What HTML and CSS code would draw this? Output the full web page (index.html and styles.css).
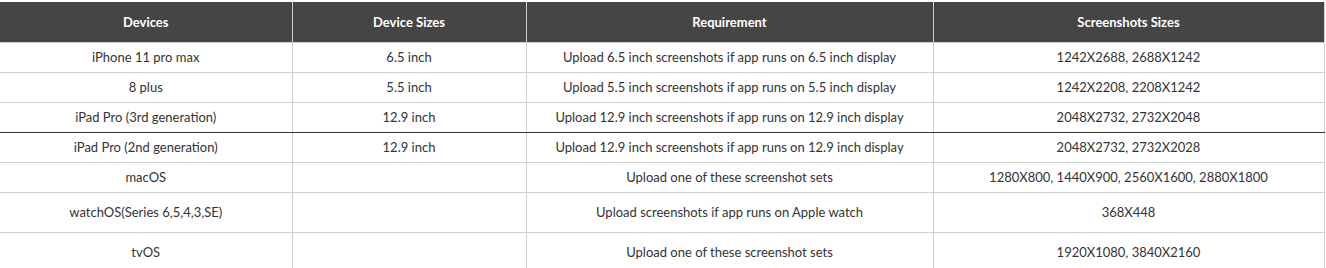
FILE: index.html
```html
<!DOCTYPE html>
<html lang="en">
<head>
  <meta charset="UTF-8" />
  <title>App Store Screenshot Sizes</title>
  <meta name="viewport" content="width=device-width, initial-scale=1.0" />
  <link rel="stylesheet" href="styles.css">
</head>
<body>
  <table class="sizes-table">
    <colgroup>
      <col class="col-device">
      <col class="col-size">
      <col class="col-req">
      <col class="col-shots">
    </colgroup>
    <thead>
      <tr>
        <th>Devices</th>
        <th>Device Sizes</th>
        <th>Requirement</th>
        <th>Screenshots Sizes</th>
      </tr>
    </thead>
    <tbody>
      <tr>
        <td>iPhone 11 pro max</td>
        <td>6.5 inch</td>
        <td>Upload 6.5 inch screenshots if app runs on 6.5 inch display</td>
        <td>1242X2688, 2688X1242</td>
      </tr>
      <tr>
        <td>8 plus</td>
        <td>5.5 inch</td>
        <td>Upload 5.5 inch screenshots if app runs on 5.5 inch display</td>
        <td>1242X2208, 2208X1242</td>
      </tr>
      <tr class="divider">
        <td>iPad Pro (3rd generation)</td>
        <td>12.9 inch</td>
        <td>Upload 12.9 inch screenshots if app runs on 12.9 inch display</td>
        <td>2048X2732, 2732X2048</td>
      </tr>
      <tr>
        <td>iPad Pro (2nd generation)</td>
        <td>12.9 inch</td>
        <td>Upload 12.9 inch screenshots if app runs on 12.9 inch display</td>
        <td>2048X2732, 2732X2028</td>
      </tr>
      <tr>
        <td>macOS</td>
        <td></td>
        <td>Upload one of these screenshot sets</td>
        <td>1280X800, 1440X900, 2560X1600, 2880X1800</td>
      </tr>
      <tr class="tall">
        <td>watchOS(Series 6,5,4,3,SE)</td>
        <td></td>
        <td>Upload screenshots if app runs on Apple watch</td>
        <td>368X448</td>
      </tr>
      <tr class="tall">
        <td>tvOS</td>
        <td></td>
        <td>Upload one of these screenshot sets</td>
        <td>1920X1080, 3840X2160</td>
      </tr>
    </tbody>
  </table>
</body>
</html>
```

FILE: styles.css
```css
body {
  font-family: Lato, "Liberation Sans", sans-serif;
  background-color: #fff;
  color: #333;
  margin: 0;
  padding-top: 2px;
}

.sizes-table {
  width: 1324px;
  border-collapse: collapse;
  table-layout: fixed;
  font-size: 13px;
}

.col-device { width: 292px; }
.col-size { width: 234px; }
.col-req { width: 407px; }
.col-shots { width: 391px; }

.sizes-table th,
.sizes-table td {
  text-align: center;
  border: 1px solid #cfcfcf;
  line-height: 17px;
}

.sizes-table th:first-child,
.sizes-table td:first-child {
  border-left: none;
}

.sizes-table th {
  background-color: #454545;
  color: #fff;
  font-weight: bold;
  padding: 12px 8px 11px;
  border-top: none;
}

.sizes-table td {
  padding: 6px 8px;
}

.sizes-table tr.divider td {
  border-bottom: 1px solid #333;
}

.sizes-table tr.tall td {
  padding: 11px 8px;
}
```
